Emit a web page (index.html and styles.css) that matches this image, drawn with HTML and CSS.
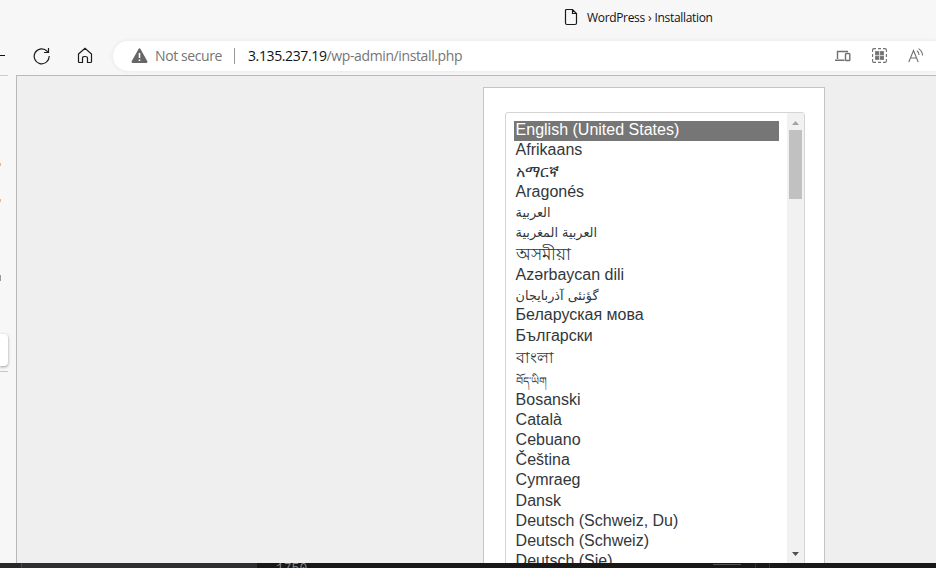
FILE: index.html
```
<!DOCTYPE html>
<html lang="en">
<head>
<meta charset="utf-8">
<title>WordPress › Installation</title>
<link rel="stylesheet" href="styles.css">
</head>
<body>
<div class="browser">
  <header class="tabs">
    <svg class="file" width="14" height="18" viewBox="0 0 14 18"><path d="M2.5 1.5H8.5L12.5 5.5V15Q12.5 16.5 11 16.5H3Q1.5 16.5 1.5 15V2.5Q1.5 1.5 2.5 1.5ZM8.5 1.5V5.5H12.5"/></svg>
    <span class="tab-title">WordPress › Installation</span>
  </header>
  <nav class="toolbar">
    <span class="back"></span>
    <svg class="reload" width="18" height="18" viewBox="0 0 18 18"><path d="M16.2 9A7.5 7.5 0 1 1 14.3 4.3L15.5 5.5M15.5 1V5.5H11"/></svg>
    <svg class="home" width="16" height="17" viewBox="0 0 16 17"><path d="M1.5 7L8 1.3L14.5 7V14.5Q14.5 15.5 13.5 15.5H10.5V11Q10.5 9.5 8 9.5T5.5 11V15.5H2.5Q1.5 15.5 1.5 14.5Z"/></svg>
    <div class="address">
      <svg class="warn" width="17" height="16" viewBox="0 0 17 16"><path class="tri" d="M7.4 1.2Q8.5-.5 9.6 1.2L16.2 13Q17 15 15.2 15H1.8Q0 15 .8 13Z"/><path class="mark" d="M8.5 5V10M8.5 11.4V13"/></svg>
      <span class="security">Not secure</span>
      <span class="divider"></span>
      <span class="url"><b>3.135.237.19</b>/wp-admin/install.php</span>
      <span class="actions">
        <svg width="16" height="12" viewBox="0 0 16 12"><path d="M2.5 9V1.5H13M0 10.3H9.5" stroke-width="1.4"/><rect x="10.5" y="3.5" width="4.3" height="7" rx=".8" stroke-width="1.4"/></svg>
        <svg width="15" height="15" viewBox="0 0 15 15"><path d="M.6 4V2Q.6.6 2 .6H4M6 .6H9M11 .6H13Q14.4.6 14.4 2V4M14.4 6V9M14.4 11V13Q14.4 14.4 13 14.4H11M9 14.4H6M4 14.4H2Q.6 14.4.6 13V11M.6 9V6"/><path class="solid" d="M3 3H7.2V7.2H3ZM7.8 3H12V7.2H7.8ZM3 7.8H7.2V12H3ZM7.8 7.8H12V12H7.8Z"/></svg>
        <svg width="16" height="15" viewBox="0 0 16 15"><path d="M.8 14L5.5 2.5L10.2 14M2.4 10H8.6M9 2.7Q11 4.2 11.1 7M10.6.6Q14.3 3 14.6 7.5"/></svg>
      </span>
    </div>
  </nav>
  <div class="body">
    <aside class="sidebar"><i class="tick"></i><i class="tick second"></i><i class="knob"></i><i class="card"></i><i class="rule"></i></aside>
    <main class="page">
      <section class="panel">
        <div class="select">
          <ul class="options">
            <li class="selected">English (United States)</li>
            <li>Afrikaans</li>
            <li class="amharic">አማርኛ</li>
            <li>Aragonés</li>
            <li class="arabic a1">العربية</li>
            <li class="arabic a2">العربية المغربية</li>
            <li class="bengali assamese">অসমীয়া</li>
            <li>Azərbaycan dili</li>
            <li class="arabic a3">گؤنئی آذربایجان</li>
            <li>Беларуская мова</li>
            <li class="low">Български</li>
            <li class="bengali">বাংলা</li>
            <li class="tibetan">བོད་ཡིག</li>
            <li>Bosanski</li>
            <li>Català</li>
            <li>Cebuano</li>
            <li>Čeština</li>
            <li>Cymraeg</li>
            <li class="low">Dansk</li>
            <li>Deutsch (Schweiz, Du)</li>
            <li>Deutsch (Schweiz)</li>
            <li>Deutsch (Sie)</li>
          </ul>
          <div class="scrollbar">
            <svg width="7" height="4" viewBox="0 0 7 4"><path fill="#a3a3a3" d="M0 4L3.5 0L7 4Z"/></svg>
            <span class="thumb"></span>
            <svg class="down" width="7" height="4" viewBox="0 0 7 4"><path fill="#505050" d="M0 0H7L3.5 4Z"/></svg>
          </div>
        </div>
      </section>
    </main>
  </div>
  <footer class="strip"><span class="left"></span><span class="number">1750</span><span class="smudge"></span><span class="cell"></span></footer>
</div>
</body>
</html>
```

FILE: styles.css
```
* { box-sizing: border-box; }
body { margin: 0; overflow: hidden; background: #f7f7f7; font-family: "Open Sans", "Noto Sans", sans-serif; }
svg { display: block; flex: none; fill: none; stroke: #1b1b1b; stroke-width: 1.2; }
.browser { width: 936px; height: 568px; display: flex; flex-direction: column; overflow: hidden; }
.tabs { height: 36px; flex: none; display: flex; align-items: center; padding-left: 564px; }
.file { margin-top: -2px; }
.tab-title { margin-left: 9px; font-size: 12px; line-height: 18px; color: #111; white-space: nowrap; letter-spacing: -.33px; word-spacing: .4px; }
.toolbar { height: 39px; flex: none; display: flex; align-items: center; }
.back { width: 5px; height: 1px; background: #111; }
.reload { margin-left: 27.5px; }
.home { margin-left: 26.5px; }
.address { margin-left: 20px; width: 823px; height: 30px; flex: none; display: flex; align-items: center; padding-left: 18px; background: #fff; border-radius: 15px 0 0 15px; box-shadow: 0 0 4px #e4e4e4; font-size: 14px; color: #757575; white-space: nowrap; }
.warn { stroke: none; }
.tri { fill: #666; }
.mark { stroke: #fff; stroke-width: 1.6; }
.security { width: 79px; margin-left: 7px; letter-spacing: -.4px; }
.divider { width: 1px; height: 16px; background: #999; }
.url { margin-left: 13px; letter-spacing: -.38px; }
.url b { font-weight: 400; color: #111; }
.actions { margin-left: auto; margin-right: 12px; display: flex; align-items: center; gap: 21px; }
.actions svg { stroke: #717171; stroke-width: 1.1; }
.actions .solid { fill: #717171; stroke: #eee; stroke-width: .3; }
.body { height: 488px; flex: none; display: flex; }
.sidebar { width: 16px; flex: none; display: flex; flex-direction: column; align-items: flex-start; background: linear-gradient(#ccc, #ccc) 0 0 / 8px 1px no-repeat; }
.tick { width: 1px; height: 3px; margin-top: 88px; background: #ffb277; }
.second { margin-top: 33px; }
.knob { width: 1px; height: 6px; margin-top: 73px; background: #999; }
.card { width: 8px; height: 32px; margin-top: 53px; background: #fff; border-radius: 0 4px 4px 0; box-shadow: 0 1px 3px #999; }
.rule { width: 8px; height: 1px; margin-top: 5px; background: #c8c8c8; }
.page { flex: 1; border: solid #b9b9b9; border-width: 1px 0 0 1px; background: #efefef; padding: 11px 0 0 466px; overflow: hidden; }
.panel { width: 342px; height: 500px; border: 1px solid #c3c4c7; background: #fff; padding: 24px 20px 0 21px; }
.select { width: 300px; height: 460px; display: flex; justify-content: space-between; border: 1px solid #d5d5d5; border-radius: 3px; }
.options { list-style: none; width: 273px; margin: 0; padding: 8px 0 0 8px; display: grid; align-content: start; grid-template-rows: 20px 20px 22px 20px 20px 21px 22px 20px 20px 20px 21px 23px 21px 20px 20px 20px 20px 20px 21px 20px 20px 20px; font: 16px/18px "Liberation Sans", "Noto Sans", sans-serif; color: #32373c; }
.options li { padding-left: 1.6px; white-space: nowrap; }
.options .selected { background: #767676; color: #fff; }
.options .low { line-height: 20px; }
.options .amharic { line-height: 22px; font-size: 15.5px; }
.options .arabic { font-family: "DejaVu Sans", sans-serif; font-size: 12.8px; line-height: 19px; }
.options .bengali { line-height: 22px; }
.options .assamese { font-size: 17px; }
.options .tibetan { line-height: 23px; font-size: 11px; }
.scrollbar { width: 17px; height: 450px; display: flex; flex-direction: column; align-items: center; padding-top: 8px; background: #f1f1f1; }
.scrollbar svg { stroke: none; }
.thumb { width: 13px; height: 69px; margin-top: 5px; background: #c1c1c1; }
.down { margin-top: auto; margin-bottom: 7px; }
.strip { height: 5px; flex: none; display: flex; overflow: hidden; background: #181818; }
.left { width: 257px; background: linear-gradient(90deg, #28282a 21px, #48484b 21px, #48484b 22px, #2d2d32 22px); }
.number { margin-left: 19px; width: 36px; font: 13px/12px "Liberation Mono", monospace; color: #858585; }
.smudge { width: 28px; height: 1px; margin: 1px 0 0 401px; background: #555; }
.cell { width: 15px; margin-left: 14px; border: solid #333; border-width: 0 1px; }
```
